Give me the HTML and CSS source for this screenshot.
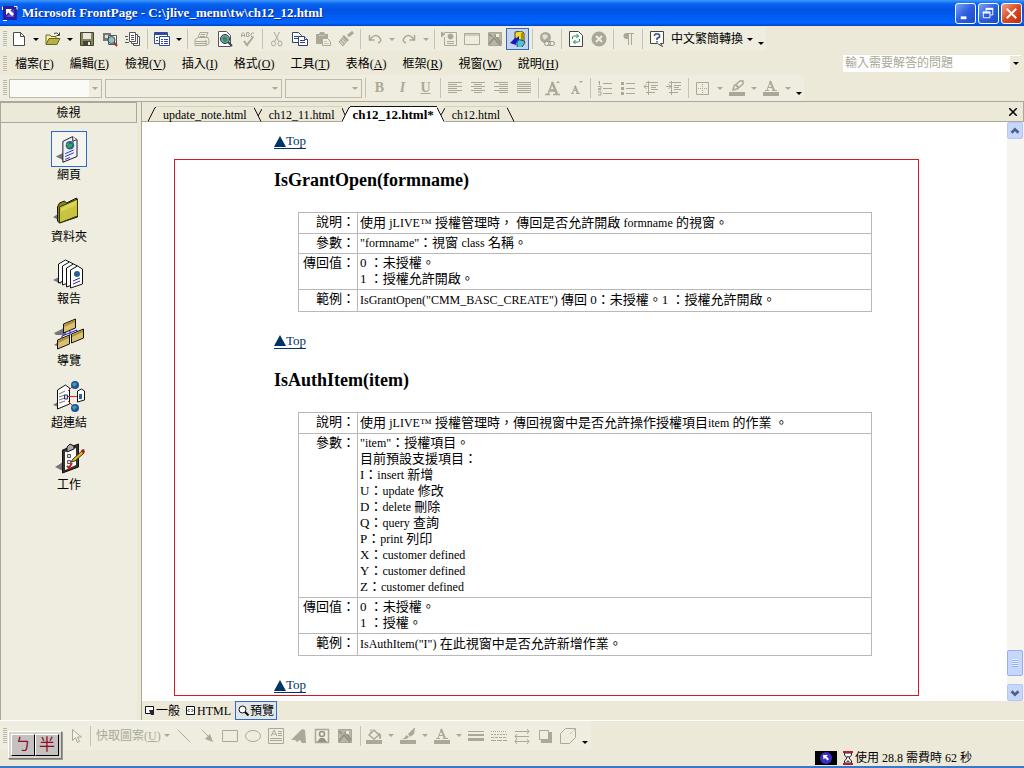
FILE: index.html
```html
<!DOCTYPE html>
<html lang="zh-Hant">
<head>
<meta charset="utf-8">
<title>Microsoft FrontPage - C:\jlive_menu\tw\ch12_12.html</title>
<link rel="stylesheet" href="styles.css">
</head>
<body>
<div class="window">
  <header class="titlebar">
    <svg class="app-icon" viewBox="0 0 16 16"><path d="M1 1h14v14H1z" fill="#2a1fa0"/><path d="M4 12L12 4v8z" fill="#5a50d0"/><path d="M4 4h6L8.500 5.500 12 9l-2 2-3.500-3.500L4 10z" fill="#fff"/><path d="M1 15.500h4M12 1.500h3v3M.5 5V1.500" stroke="#fff" fill="none"/></svg>
    <h1 class="title">Microsoft FrontPage - C:\jlive_menu\tw\ch12_12.html</h1>
    <div class="win-controls">
      <button class="win-btn" aria-label="最小化"><svg viewBox="0 0 20 20"><path d="M5 14.500h6" stroke="#fff" stroke-width="3"/></svg></button>
      <button class="win-btn" aria-label="還原"><svg viewBox="0 0 20 20" fill="none" stroke="#fff"><path d="M7.500 8V5.500h7v6H12" /><path d="M7 5h8" stroke-width="2"/><path d="M4.500 8.500h7v6h-7z"/><path d="M4 9h8" stroke-width="2"/></svg></button>
      <button class="win-btn close" aria-label="關閉"><svg viewBox="0 0 20 20"><path d="M5 5l10 10M15 5L5 15" stroke="#fff" stroke-width="2"/></svg></button>
    </div>
  </header>

  <div class="bars">
    <div class="bar-row">
      <div class="toolbar">
        <span class="grip"></span>
        <button class="tool" aria-label="新增"><svg viewBox="0 0 16 16"><path d="M2.500 1.500h7l4 4v9h-11z" fill="#fff" stroke="#4a4a4a"/><path d="M9.500 1.500v4h4" fill="none" stroke="#4a4a4a"/></svg></button>
        <button class="drop" aria-label="新增選項"></button>
        <button class="tool" aria-label="開啟"><svg viewBox="0 0 16 16"><path d="M1 13V4h4l1 1.500h5V8" fill="#f5f0a8" stroke="#6b6a1c"/><path d="M1 13.500l3-6h11l-3 6z" fill="#b5b04a" stroke="#6b6a1c"/><path d="M9 2.500q3-2 5 1.500M14.500 1.500V4.500h-3" fill="none" stroke="#444"/></svg></button>
        <button class="drop" aria-label="開啟選項"></button>
        <button class="tool" aria-label="儲存"><svg viewBox="0 0 16 16"><path d="M1.500 1.500h13v13h-13z" fill="#85855a" stroke="#444430"/><path d="M4 2h8v6H4z" fill="#e8e8dc"/><path d="M4 10h8v5H4z" fill="#444430"/><path d="M9 11h2v3H9z" fill="#eee"/></svg></button>
        <button class="tool" aria-label="尋找"><svg viewBox="0 0 16 16"><path d="M1 2h8v8H1z" fill="#777"/><path d="M3 4h5v3H3z" fill="#ddd"/><path d="M6.500 4.500h8v9h-8z" fill="#fff" stroke="#555"/><circle cx="9.500" cy="9" r="3.500" fill="#8cc5c8" stroke="#444"/><path d="M12 11.500l3 3.500" stroke="#9a3030" stroke-width="2"/></svg></button>
        <button class="tool" aria-label="發佈"><svg viewBox="0 0 16 16" fill="#fff" stroke="#555"><path d="M8.500 5.500h6v9h-6z"/><path d="M6.500 3.500h6v9h-6z"/><path d="M4.500 1.500h6v9h-6z"/><path d="M6 4.500h3M6 6.500h3M6 8.500h3M0 5.500h3M1 8.500h2M0 11.500h4"/></svg></button>
        <span class="sep"></span>
        <button class="tool" aria-label="資料夾清單"><svg viewBox="0 0 16 16"><path d="M.5 1.500h13v11H.5z" fill="#fff" stroke="#304a9c"/><path d="M1 2h12v2H1z" fill="#304a9c"/><path d="M5.500 5.500h10v9h-10z" fill="#fff" stroke="#304a9c"/><path d="M2 6.500h2M2 9.500h2M7 8.500h2M10 8.500h4M7 10.500h2M10 10.500h4M7 12.500h2M10 12.500h4" stroke="#304a9c"/></svg></button>
        <button class="drop" aria-label="窗格選項"></button>
        <span class="sep"></span>
        <button class="tool" disabled aria-label="列印"><svg viewBox="0 0 16 16" fill="none" stroke="#aaa998"><path d="M4 7l2-5.500h8L12 7M1 8.500L4 6.500h10l1 3v3l-3 2H1z"/><path d="M1.500 10.500h11M1.500 12.500h11M6.500 3.500h5M6 5.500h5M12 9v5" /></svg></button>
        <button class="tool" aria-label="預覽"><svg viewBox="0 0 16 16"><path d="M1.500.5h8l4 4v11h-12z" fill="#fff" stroke="#555"/><circle cx="8" cy="8" r="4.500" fill="#6aa7b0" stroke="#334"/><path d="M5 7q3-3 5 0t-3 4" fill="#3d8c4d"/><path d="M11 11l4 4" stroke="#444" stroke-width="2"/></svg></button>
        <button class="tool" disabled aria-label="拼字檢查"><svg viewBox="0 0 16 16" fill="none" stroke="#aaa998"><path d="M1.500 6V3L3 1.500 4.500 3v3M2 4.500h2M6.500 1.500V5.500H9L9.500 4.500 8 3.500 9.500 2.500 9 1.500zM14 2h-2l-1 1v2l1 1h2"/><path d="M4 10l3 4 6-8" stroke-width="2"/></svg></button>
        <span class="sep"></span>
        <button class="tool" disabled aria-label="剪下"><svg viewBox="0 0 16 16" fill="none" stroke="#aaa998"><path d="M5 1l4.500 9M10.500 1L6 10"/><ellipse cx="4.500" cy="12.500" rx="2" ry="2.500"/><ellipse cx="11" cy="12.500" rx="2" ry="2.500"/></svg></button>
        <button class="tool" aria-label="複製"><svg viewBox="0 0 16 16" fill="#fff" stroke="#304070"><path d="M.5 1.500h6l3 3v7h-9z"/><path d="M2 5.500h4M2 7.500h4"/><path d="M6.500 5.500h6l3 3v6h-9z"/><path d="M8 9.500h5M8 11.500h5M12.500 5.500v3h3"/></svg></button>
        <button class="tool" disabled aria-label="貼上"><svg viewBox="0 0 16 16"><path d="M1 3h3l1-2h4l1 2h3v10H1z" fill="#aaa998"/><path d="M7.500 7.500h5l3 3v4h-8z" fill="#f0eee0" stroke="#aaa998"/><path d="M9 10.500h3M9 12.500h5M4 4.500h6" stroke="#c9c7b8"/></svg></button>
        <button class="tool" disabled aria-label="複製格式"><svg viewBox="0 0 16 16"><path d="M15 1l-5 4" stroke="#aaa998" stroke-width="3"/><path d="M6 4l5 5-2 2-5-5z" fill="#aaa998"/><path d="M4 7l4 4-3 4-4-4z" fill="#d0cebe" stroke="#aaa998"/><path d="M3 9l3 4" stroke="#aaa998"/></svg></button>
        <span class="sep"></span>
        <button class="tool" disabled aria-label="復原"><svg viewBox="0 0 16 16" fill="none" stroke="#aaa998"><path d="M2.500 4v5h5M3 8.500Q8 2 12 6t-1 6" stroke-width="1.500"/></svg></button>
        <button class="drop off" disabled aria-label="復原選項"></button>
        <button class="tool" disabled aria-label="取消復原"><svg viewBox="0 0 16 16" fill="none" stroke="#aaa998"><path d="M13.500 4v5h-5M13 8.500Q8 2 4 6t1 6" stroke-width="1.500"/></svg></button>
        <button class="drop off" disabled aria-label="取消復原選項"></button>
        <span class="sep"></span>
        <button class="tool" disabled aria-label="網頁元件"><svg viewBox="0 0 16 16" fill="none" stroke="#aaa998"><path d="M3.500 1.500h12v13h-12V6"/><path d="M0 1l4 2-4 3z" fill="#aaa998"/><circle cx="9.500" cy="5.500" r="2.500" fill="#aaa998"/><path d="M6 10.500h7M6 12.500h7"/></svg></button>
        <button class="tool" disabled aria-label="插入表格"><svg viewBox="0 0 16 16" fill="none" stroke="#aaa998"><path d="M.5 2.500h15v11H.5zM0 4h16"/></svg></button>
        <button class="tool" disabled aria-label="插入圖片"><svg viewBox="0 0 16 16"><path d="M1.500 1.500h13v13h-13z" fill="#b8b6a6" stroke="#aaa998"/><path d="M2 13l5-6 6 7M2 3l3 3M8 4l6 8" stroke="#8f8e7f" stroke-width="1.500" fill="none"/><path d="M9 3h3v3H9z" fill="#efeddf"/></svg></button>
        <button class="tool active" aria-label="繪圖"><svg viewBox="0 0 16 16"><path d="M5 1l6-1 3 2v8H5z" fill="#f0dc28" stroke="#444"/><path d="M11 2h3v8h-3z" fill="#a89010"/><path d="M6 6v8L0 12zM4 9l5-4v9z" fill="#1818c0"/><path d="M7 12q0-4 4-3t4 2-3 5-5-1z" fill="#48c8d0" stroke="#247"/></svg></button>
        <span class="sep"></span>
        <button class="tool" disabled aria-label="超連結"><svg viewBox="0 0 16 16"><circle cx="6.500" cy="6.500" r="5.500" fill="#aaa998"/><path d="M3 5q2-3 5-1T5 9z" fill="#e2e0d0"/><rect x="5.500" y="10.500" width="6" height="4" rx="2" fill="#efeddf" stroke="#949384"/><rect x="9.500" y="10.500" width="6" height="4" rx="2" fill="none" stroke="#949384"/></svg></button>
        <span class="sep"></span>
        <button class="tool" aria-label="重新整理"><svg viewBox="0 0 16 16"><path d="M1.500.5h9l4 4v11h-13z" fill="#fff" stroke="#444"/><path d="M4.500 8V6l1-1h5M8.500 3l2 2-2 2M11.500 8v2l-1 1h-5M7.500 9l-2 2 2 2" fill="none" stroke="#218a43"/></svg></button>
        <button class="tool" disabled aria-label="停止"><svg viewBox="0 0 16 16"><circle cx="8" cy="8" r="7.500" fill="#aaa998"/><path d="M5 5l6 6M11 5l-6 6" stroke="#efeddf" stroke-width="2"/></svg></button>
        <span class="sep"></span>
        <button class="tool" disabled aria-label="顯示全部"><svg viewBox="0 0 16 16"><path d="M8.500 2v12M11.500 2v12M6 2.500h8" stroke="#aaa998"/><path d="M9 2H6.500a3 3 0 0 0 0 6H9z" fill="#aaa998"/></svg></button>
        <span class="sep"></span>
        <button class="tool" aria-label="說明"><svg viewBox="0 0 16 16"><path d="M1.500.5h13v12h-3l2 3-5-3h-7z" fill="#fffff0" stroke="#444"/><path d="M5.500 5V4l1-1h3l1 1v2L8 7.500V9M8 10v1.500" fill="none" stroke="#304a9c" stroke-width="1.500"/></svg></button>
        <button class="text-tool">中文繁簡轉換</button>
        <button class="drop" aria-label="轉換選項"></button>
        <button class="drop overflow" aria-label="工具列選項"></button>
      </div>
    </div>

    <div class="bar-row menu-row">
      <span class="grip"></span>
      <nav class="menu">
        <button>檔案(<u>F</u>)</button>
        <button>編輯(<u>E</u>)</button>
        <button>檢視(<u>V</u>)</button>
        <button>插入(<u>I</u>)</button>
        <button>格式(<u>O</u>)</button>
        <button>工具(<u>T</u>)</button>
        <button>表格(<u>A</u>)</button>
        <button>框架(<u>R</u>)</button>
        <button>視窗(<u>W</u>)</button>
        <button>說明(<u>H</u>)</button>
      </nav>
      <div class="ask">
        <input type="text" placeholder="輸入需要解答的問題" aria-label="輸入需要解答的問題">
        <button class="drop" aria-label="最近的問題"></button>
      </div>
    </div>

    <div class="bar-row format-row">
      <div class="toolbar">
        <span class="grip"></span>
        <div class="combos">
          <span class="combo style"><select disabled aria-label="樣式"><option></option></select></span>
          <span class="combo font"><select disabled aria-label="字型"><option></option></select></span>
          <span class="combo size"><select disabled aria-label="字型大小"><option></option></select></span>
        </div>
        <span class="sep"></span>
        <button class="tool letter" disabled><b>B</b></button>
        <button class="tool letter" disabled><i>I</i></button>
        <button class="tool letter" disabled><u>U</u></button>
        <span class="sep"></span>
        <button class="tool" disabled aria-label="靠左對齊"><svg viewBox="0 0 16 16"><path d="M1 2.500h14M1 4.500h9M1 6.500h14M1 8.500h9M1 10.500h14M1 12.500h9" stroke="#aaa998"/></svg></button>
        <button class="tool" disabled aria-label="置中"><svg viewBox="0 0 16 16"><path d="M1 2.500h14M4 4.500h8M1 6.500h14M4 8.500h8M1 10.500h14M4 12.500h8" stroke="#aaa998"/></svg></button>
        <button class="tool" disabled aria-label="靠右對齊"><svg viewBox="0 0 16 16"><path d="M1 2.500h14M6 4.500h9M1 6.500h14M6 8.500h9M1 10.500h14M6 12.500h9" stroke="#aaa998"/></svg></button>
        <button class="tool" disabled aria-label="左右對齊"><svg viewBox="0 0 16 16"><path d="M1 2.500h14M1 4.500h14M1 6.500h14M1 8.500h14M1 10.500h14M1 12.500h14" stroke="#aaa998"/></svg></button>
        <span class="sep"></span>
        <button class="tool" disabled aria-label="放大字型"><svg viewBox="0 0 16 16"><path d="M0 14.500h5M8 14.500h7M3 14L7.500 2.500" stroke="#aaa998" stroke-width="1.500"/><path d="M7 2l5 12M4.500 10.500h6" stroke="#aaa998" stroke-width="2.500"/><path d="M11 3l2-2 2 2z" fill="#aaa998"/></svg></button>
        <button class="tool" disabled aria-label="縮小字型"><svg viewBox="0 0 16 16"><path d="M3 13.500h3M8 13.500h4M4.500 13l3-7.500M5 10.500h4" stroke="#aaa998"/><path d="M7 6l3 7.500" stroke="#aaa998" stroke-width="2"/><path d="M11 1h4l-2 2z" fill="#aaa998"/></svg></button>
        <span class="sep"></span>
        <button class="tool" disabled aria-label="編號"><svg viewBox="0 0 16 16"><path d="M2.500 1v4M1 2h2M1 6.500h3v2H1.500V10h3M1 12h3v3H1M6 3.500h9M6 8.500h9M6 13.500h9" fill="none" stroke="#aaa998"/></svg></button>
        <button class="tool" disabled aria-label="項目符號"><svg viewBox="0 0 16 16"><path d="M1 2h3v3H1zM1 7h3v3H1zM1 12h3v3H1z" fill="#aaa998"/><path d="M6 3.500h9M6 8.500h9M6 13.500h9" stroke="#aaa998"/></svg></button>
        <button class="tool" disabled aria-label="減少縮排"><svg viewBox="0 0 16 16"><path d="M3 2.500h12M8 5.500h7M8 7.500h5M8 9.500h7M3 12.500h9M1 6.500h5M3.500 4L1 6.500 3.500 9M5.500 1v14" fill="none" stroke="#aaa998"/></svg></button>
        <button class="tool" disabled aria-label="增加縮排"><svg viewBox="0 0 16 16"><path d="M3 2.500h12M8 5.500h7M8 7.500h5M8 9.500h7M3 12.500h9M0 6.500h5M2.500 4L5 6.500 2.500 9M5.500 1v14" fill="none" stroke="#aaa998"/></svg></button>
        <span class="sep"></span>
        <button class="tool" disabled aria-label="框線"><svg viewBox="0 0 16 16"><path d="M1.500 2.500h12v12h-12z" fill="none" stroke="#aaa998"/><path d="M7.500 4v9M3 8.500h9" stroke="#aaa998" stroke-dasharray="1 1"/></svg></button>
        <button class="drop off" disabled aria-label="框線選項"></button>
        <button class="tool" disabled aria-label="醒目提示"><svg viewBox="0 0 16 16"><path d="M0 12h16v4H0z" fill="#aaa998"/><path d="M4 10l1-4 6-5h3v3L8 9z" fill="none" stroke="#aaa998" stroke-width="1.500"/><path d="M7 5l3 3" stroke="#aaa998" stroke-width="2"/></svg></button>
        <button class="drop off" disabled aria-label="醒目提示選項"></button>
        <button class="tool" disabled aria-label="字型色彩"><svg viewBox="0 0 16 16"><path d="M0 12h16v4H0z" fill="#aaa998"/><path d="M2 10.500h4M9 10.500h5M4 10l3.500-9M5 7.500h5" stroke="#aaa998"/><path d="M7 1l4 9.500" stroke="#aaa998" stroke-width="2"/></svg></button>
        <button class="drop off" disabled aria-label="字型色彩選項"></button>
        <button class="drop overflow" aria-label="格式工具列選項"></button>
      </div>
    </div>
  </div>

  <div class="workspace">
    <aside class="views">
      <h2 class="views-title">檢視</h2>
      <nav class="view-list">
        <button class="view current"><svg viewBox="0 0 36 36"><path d="M4 26l8-4v8z" fill="#777"/><path d="M11.500 10l10-5 5 3v18l-15 6z" fill="#f2f2fa" stroke="#111"/><path d="M22 5v5l4-2" fill="#fff" stroke="#111"/><circle cx="19" cy="14" r="4.500" fill="#24608c"/><path d="M15 13q3-3 4 0l3-1-1 4-4 1z" fill="#38a060"/><path d="M14 23l9-4M14 26l9-4M14 29l5-2" stroke="#2222c8"/></svg><span>網頁</span></button>
        <button class="view"><svg viewBox="0 0 36 36"><path d="M2 24l7-4v8z" fill="#777"/><path d="M6.500 14l2-4 5-2 2 2 10-5 1 2v17l-18 6-2-2z" fill="#8c8818" stroke="#111"/><path d="M8.500 14l18-8v17l-18 7z" fill="#c8c440" stroke="#333300"/><path d="M10 15l15-7v4l-15 7z" fill="#dad65c"/></svg><span>資料夾</span></button>
        <button class="view"><svg viewBox="0 0 36 36" stroke="#111"><path d="M2 25l8-4v8z" fill="#777" stroke="none"/><path d="M7.500 9l7-4 4 2v17l-11 4z" fill="#fff"/><path d="M11.500 11l7-4 4 2v17l-11 4z" fill="#fff"/><path d="M15.500 13l7-4 4 2v17l-11 4z" fill="#fff"/><path d="M19.500 15l7-4 5 3v15l-12 4z" fill="#fff"/><circle cx="26" cy="19" r="3" fill="#286090" stroke="none"/><path d="M22 26l7-3M22 29l7-3" stroke="#22c"/></svg><span>報告</span></button>
        <button class="view"><svg viewBox="0 0 36 36"><path d="M3 16l12-6v8H5zM3 28l6-4v6z" fill="#777"/><g fill="#d8c078" stroke="#111"><path d="M12.500 7l12-5v9l-12 5z"/><path d="M6.500 23l12-5v9l-12 5z"/><path d="M20.500 17l12-5v9l-12 5z"/></g><path d="M13 8l11-5v2l-11 5zM7 24l11-5v2L7 26zM21 18l11-5v2l-11 5z" fill="#b48c28"/><path d="M19 14v4M11 21v-2l15-6v2" fill="none" stroke="#22c"/></svg><span>導覽</span></button>
        <button class="view"><svg viewBox="0 0 36 36"><path d="M2 26l8-5v8z" fill="#777"/><path d="M6.500 11l8-5 4 3v16l-12 5z" fill="#fff" stroke="#111"/><path d="M8 15l6-3M8 18l6-2M8 21l6-2M8 24l6-2" stroke="#777"/><path d="M17 12l6-6M16 17.500h10M17 22l6 6" stroke="#d22"/><path d="M13.500 16h3v4h-3z" fill="#ddd" stroke="#336"/><circle cx="24" cy="6" r="4" fill="#2050a0"/><path d="M21 5q3-3 5 0l-3 3z" fill="#38a890"/><circle cx="24" cy="29" r="4" fill="#2050a0"/><path d="M21 28q3-3 5 0l-3 3z" fill="#38a890"/><path d="M26.500 12l4-2 3 2v9l-7 2z" fill="#fff" stroke="#111"/><path d="M28 15h3v5h-3z" fill="#26a"/></svg><span>超連結</span></button>
        <button class="view"><svg viewBox="0 0 36 36"><path d="M4 26l8-5v9z" fill="#777"/><path d="M11.500 9l16-6v23l-16 6z" fill="#33332a" stroke="#111"/><path d="M14 11l11-4v17l-11 5z" fill="#fff"/><path d="M16 6l3-3 2 1 2 1v3l-7 3z" fill="#aaa" stroke="#111"/><path d="M16.500 13.500h3v3h-3zM16.500 19.500h3v3h-3z" fill="#ddd" stroke="#555"/><path d="M16 25l2 2 3-5" fill="none" stroke="#d11" stroke-width="2"/><path d="M22 18l9-8 2 2-9 8-4 1z" fill="#e8b820" stroke="#333"/><path d="M30 9l3-1 1 3-2 2z" fill="#a82020"/></svg><span>工作</span></button>
      </nav>
    </aside>

    <main class="editor">
      <div class="tabs">
        <svg class="slant" viewBox="0 0 8 16"><path d="M0 15.500L7 1.500h1" fill="none" stroke="#111"/></svg>
        <button class="tab">update_note.html</button>
        <svg class="slant" viewBox="0 0 8 16"><path d="M0 1.500l7 14M8 3L4 10" fill="none" stroke="#111"/></svg>
        <button class="tab">ch12_11.html</button>
        <svg class="slant" viewBox="0 0 8 16"><path d="M8 1v15H0z" fill="#fff"/><path d="M0 15.500L7 1.500h1M0 2l3 7" fill="none" stroke="#111"/></svg>
        <button class="tab current">ch12_12.html*</button>
        <svg class="slant" viewBox="0 0 8 16"><path d="M0 1v15h8z" fill="#fff"/><path d="M0 1.500l7 14M8 2L4 9" fill="none" stroke="#111"/></svg>
        <button class="tab">ch12.html</button>
        <svg class="slant" viewBox="0 0 8 16"><path d="M0 1.500l7 14" fill="none" stroke="#111"/></svg>
        <button class="tab-close" aria-label="關閉檔案"><svg viewBox="0 0 8 8"><path d="M0 0l8 8M8 0L0 8" stroke="#000" stroke-width="1.500"/></svg></button>
      </div>

      <div class="viewport">
        <article class="doc">
          <a class="top" href="#top"><svg class="tri" viewBox="0 0 12 11"><path d="M6 0l6 11H0z" fill="#003366"/></svg>Top</a>
          <div class="frame">
            <section>
              <h2>IsGrantOpen(formname)</h2>
              <table>
                <tr><th scope="row">說明：</th><td>使用 <span class="en">jLIVE™</span> 授權管理時， 傳回是否允許開啟 <span class="en">formname</span> 的視窗。</td></tr>
                <tr><th scope="row">參數：</th><td><span class="en">"formname"</span>：視窗 <span class="en">class</span> 名稱。</td></tr>
                <tr><th scope="row">傳回值：</th><td>0 ：未授權。<br>1 ：授權允許開啟。</td></tr>
                <tr><th scope="row">範例：</th><td><span class="en">IsGrantOpen("CMM_BASC_CREATE")</span> 傳回 0：未授權。1 ：授權允許開啟。</td></tr>
              </table>
              <a class="top" href="#top"><svg class="tri" viewBox="0 0 12 11"><path d="M6 0l6 11H0z" fill="#003366"/></svg>Top</a>
            </section>
            <section>
              <h2>IsAuthItem(item)</h2>
              <table>
                <tr><th scope="row">說明：</th><td>使用 <span class="en">jLIVE™</span> 授權管理時，傳回視窗中是否允許操作授權項目<span class="en">item</span> 的作業 。</td></tr>
                <tr><th scope="row">參數：</th><td><span class="en">"item"</span>：授權項目。<br>目前預設支援項目：<br>I：<span class="en">insert</span> 新增<br>U：<span class="en">update</span> 修改<br>D：<span class="en">delete</span> 刪除<br>Q：<span class="en">query</span> 查詢<br>P：<span class="en">print</span> 列印<br>X：<span class="en">customer defined</span><br>Y：<span class="en">customer defined</span><br>Z：<span class="en">customer defined</span></td></tr>
                <tr><th scope="row">傳回值：</th><td>0 ：未授權。<br>1 ：授權。</td></tr>
                <tr><th scope="row">範例：</th><td><span class="en">IsAuthItem("I")</span> 在此視窗中是否允許新增作業。</td></tr>
              </table>
              <a class="top" href="#top"><svg class="tri" viewBox="0 0 12 11"><path d="M6 0l6 11H0z" fill="#003366"/></svg>Top</a>
            </section>
          </div>
        </article>
        <div class="scrollbar">
          <button class="scroll-btn" aria-label="向上捲動"><svg viewBox="0 0 16 16"><path d="M4 10l4-4 4 4" fill="none" stroke="#4d6185" stroke-width="3"/></svg></button>
          <div class="track"><div class="thumb"></div></div>
          <button class="scroll-btn" aria-label="向下捲動"><svg viewBox="0 0 16 16"><path d="M4 6l4 4 4-4" fill="none" stroke="#4d6185" stroke-width="3"/></svg></button>
        </div>
      </div>

      <div class="modes">
        <button class="mode"><svg viewBox="0 0 11 11"><path d="M1.500 1.500h8v7h-8z" fill="#fff" stroke="#111"/><path d="M5 5h5v5H7z" fill="#223"/></svg>一般</button>
        <button class="mode"><svg viewBox="0 0 11 11"><path d="M1.500 1.500h8v8h-8z" fill="#fff" stroke="#111"/><path d="M4.500 4L3 5.500 4.500 7M6.500 4L8 5.500 6.500 7" fill="none" stroke="#111"/></svg>HTML</button>
        <button class="mode current"><svg viewBox="0 0 11 11"><circle cx="4.500" cy="4.500" r="3.500" fill="#fff" stroke="#111"/><path d="M7 7l3.500 3.500" stroke="#111" stroke-width="2"/></svg>預覽</button>
      </div>
    </main>
  </div>

  <footer class="bottom">
    <div class="ime"><button>ㄅ</button><button>半</button></div>
    <div class="toolbar draw">
      <span class="grip"></span>
      <button class="tool pick" disabled aria-label="選取物件"><svg viewBox="0 0 16 16"><path d="M4.500 1.500v11l3-3 2 5 2-1-2-4.500h4z" fill="#f4f2e6" stroke="#aaa998"/></svg></button>
      <span class="sep"></span>
      <button class="text-tool" disabled>快取圖案(<u>U</u>)</button>
      <button class="drop off" disabled aria-label="快取圖案選項"></button>
      <button class="tool" disabled aria-label="線條"><svg viewBox="0 0 16 16"><path d="M2 2l12 12" stroke="#aaa998"/></svg></button>
      <button class="tool" disabled aria-label="箭號"><svg viewBox="0 0 16 16"><path d="M3 2l8 8" stroke="#aaa998"/><path d="M14 14l-8-3 5-5z" fill="#aaa998"/></svg></button>
      <button class="tool" disabled aria-label="矩形"><svg viewBox="0 0 16 16"><path d="M.5 2.500h15v11H.5z" fill="none" stroke="#aaa998"/></svg></button>
      <button class="tool" disabled aria-label="橢圓"><svg viewBox="0 0 16 16"><ellipse cx="8" cy="8" rx="7.500" ry="5.500" fill="none" stroke="#aaa998"/></svg></button>
      <button class="tool" disabled aria-label="文字方塊"><svg viewBox="0 0 16 16" fill="none" stroke="#aaa998"><path d="M.5.5h15v15H.5z"/><path d="M3 8l3-6 3 6M4 6h4M10 3.500h4M10 5.500h4M10 7.500h4M2 10.500h12M2 12.500h12"/></svg></button>
      <button class="tool" disabled aria-label="文字藝術師"><svg viewBox="0 0 16 16"><path d="M0 12L11 1l3 1 1 13h-4l-2-3-3 2-2-2z" fill="#aaa998"/></svg></button>
      <button class="tool" disabled aria-label="美工圖案"><svg viewBox="0 0 16 16"><path d="M1.500 1.500h13v13h-13z" fill="none" stroke="#aaa998" stroke-width="1.500"/><circle cx="8" cy="6" r="2.500" fill="none" stroke="#949384" stroke-width="1.500"/><path d="M3 14l3-4h4l3 4z" fill="#949384"/></svg></button>
      <button class="tool" disabled aria-label="圖片"><svg viewBox="0 0 16 16"><path d="M1.500 1.500h13v13h-13z" fill="#b8b6a6" stroke="#aaa998"/><path d="M2 13l5-6 6 7M2 3l3 3M8 4l6 8" stroke="#8f8e7f" stroke-width="1.500" fill="none"/><path d="M9 3h3v3H9z" fill="#efeddf"/></svg></button>
      <span class="sep"></span>
      <button class="tool" disabled aria-label="填滿色彩"><svg viewBox="0 0 16 16"><path d="M0 12h16v4H0z" fill="#aaa998"/><path d="M3 7l5-5 5 5-5 4z" fill="#efeddf" stroke="#aaa998" stroke-width="1.500"/><path d="M5 1v5M13 5q3 2 1 6z" fill="#aaa998" stroke="#aaa998"/></svg></button>
      <button class="drop off" disabled aria-label="填滿選項"></button>
      <button class="tool" disabled aria-label="線條色彩"><svg viewBox="0 0 16 16"><path d="M0 12h16v4H0z" fill="#aaa998"/><path d="M1 11q4 0 5-4l3 2q-2 3-8 2zM8 6l6-6h1l-1 6-4 3z" fill="#aaa998"/></svg></button>
      <button class="drop off" disabled aria-label="線條色彩選項"></button>
      <button class="tool" disabled aria-label="文字色彩"><svg viewBox="0 0 16 16"><path d="M0 12h16v4H0z" fill="#aaa998"/><path d="M2 10.500h4M9 10.500h5M4 10l3.500-9M5 7.500h5" stroke="#aaa998"/><path d="M7 1l4 9.500" stroke="#aaa998" stroke-width="2"/></svg></button>
      <button class="drop off" disabled aria-label="文字色彩選項"></button>
      <button class="tool" disabled aria-label="線條樣式"><svg viewBox="0 0 16 16"><path d="M0 3.500h16" stroke="#aaa998"/><path d="M0 7h16" stroke="#aaa998" stroke-width="2"/><path d="M0 11.500h16" stroke="#aaa998" stroke-width="3"/></svg></button>
      <button class="tool" disabled aria-label="虛線樣式"><svg viewBox="0 0 16 16" stroke="#aaa998"><path d="M0 3.500h16" stroke-dasharray="1 1"/><path d="M0 6.500h16" stroke-dasharray="2 1"/><path d="M0 9.500h16" stroke-dasharray="3 1"/><path d="M0 12.500h16" stroke-dasharray="5 1"/></svg></button>
      <button class="tool" disabled aria-label="箭號樣式"><svg viewBox="0 0 16 16" fill="none" stroke="#aaa998"><path d="M1 3.500h14M13 1l2 2.500L13 6M1 8.500h14M3 6L1 8.500 3 11M1 13.500h14M13 11l2 2.500-2 2.500M3 11l-2 2.500L3 16"/></svg></button>
      <button class="tool" disabled aria-label="陰影樣式"><svg viewBox="0 0 16 16"><path d="M4 4h11v11H4z" fill="#aaa998"/><path d="M2.500 2.500h9v9h-9z" fill="#efeddf" stroke="#aaa998"/></svg></button>
      <button class="tool" disabled aria-label="立體樣式"><svg viewBox="0 0 16 16"><path d="M.5 5.500l5-5h10v9l-6 6h-9z" fill="none" stroke="#aaa998"/><path d="M10 6l5-5" stroke="#aaa998" stroke-dasharray="1 1"/></svg></button>
      <button class="drop overflow" aria-label="繪圖工具列選項"></button>
    </div>
    <div class="status">
      <svg class="globe" viewBox="0 0 22 14"><path d="M0 0h22v14H0z" fill="#000"/><circle cx="11" cy="7" r="6" fill="#3a30c8"/><path d="M8 4h5l-1.500 1.500L14 8l-1.500 1.500L10 7 8.500 8.500z" fill="#fff"/></svg>
      <svg class="glass" viewBox="0 0 10 14"><path d="M1.500 2v2L4 7 1.500 10v2h7v-2L6 7l2.500-3V2z" fill="#fff" stroke="#222"/><path d="M0 1h10M0 13h10" stroke="#b02030" stroke-width="2"/><path d="M3 5h4L5 7zM3 11l2-2 2 2z" fill="#555"/></svg>
      <span>使用 28.8 需費時 62 秒</span>
    </div>
  </footer>
</div>
</body>
</html>
```
FILE: styles.css
```css
* { box-sizing: border-box; }

body {
  margin: 0;
  background: #ece9d8;
  color: #000;
  font: 12px/16px "Liberation Serif", "Noto Sans CJK TC", serif;
}

button, input, select {
  margin: 0;
  padding: 0;
  border: 0;
  background: none;
  color: inherit;
  font: inherit;
}

svg { display: block; flex: none; }

.window {
  display: flex;
  flex-direction: column;
  min-height: 100vh;
  border-bottom: 2px solid #3a78c8;
}

/* Title bar */
.titlebar {
  display: flex;
  align-items: center;
  height: 26px;
  padding: 0 2px;
  background: linear-gradient(#3c9cff 0, #0a62f0 4px, #0054e3 10px, #0060fb 20px, #0066ff 23px, #0040c0 26px);
}
.app-icon { width: 16px; height: 16px; }
.title {
  flex: 1;
  margin: 0 0 0 4px;
  color: #fff;
  font-size: 13px;
  line-height: 16px;
  text-shadow: 1px 1px #0a2a80;
}
.win-controls { display: flex; gap: 2px; }
.win-btn {
  width: 21px;
  height: 21px;
  border: 1px solid #fff;
  border-radius: 3px;
  background: linear-gradient(135deg, #7aa2f4, #2a5fe0 50%, #1c4ac8);
}
.win-btn.close { background: linear-gradient(135deg, #f0a088, #dc4a24 50%, #b83010); }

/* Tool bars */
.bars {
  padding-top: 1px;
  border-bottom: 1px solid #aca899;
}
.bar-row { display: flex; height: 24px; }
.format-row { height: 26px; }
.toolbar {
  display: flex;
  align-items: center;
  padding-left: 3px;
  background: #efeddf;
  border-radius: 2px;
}
.grip {
  flex: none;
  width: 4px;
  height: 16px;
  background: repeating-linear-gradient(#bcb9a8 0 1px, #efeddf 1px 2px);
}
.tool {
  display: flex;
  flex: none;
  align-items: center;
  justify-content: center;
  width: 23px;
  height: 22px;
}
.tool svg { width: 16px; height: 16px; }
.tool.active { border: 1px solid #316ac5; background: #c8d4ea; }
.tool.letter { color: #aaa998; font-size: 14px; font-weight: bold; }
.drop {
  flex: none;
  width: 11px;
  height: 16px;
}
.drop::after {
  content: "";
  display: block;
  width: 0;
  margin: 0 auto;
  border: 3px solid transparent;
  border-top-color: #000;
  border-bottom: 0;
}
.drop.off::after { border-top-color: #aaa998; }
.drop.overflow { align-self: flex-end; }
.sep {
  flex: none;
  width: 6px;
  height: 20px;
  background: linear-gradient(90deg, transparent 3px, #c5c2b2 3px 4px, transparent 4px);
}
.text-tool { padding: 0 1px 0 3px; white-space: nowrap; }
.text-tool:disabled { color: #aaa998; }

.menu-row { align-items: center; padding: 1px 3px 0; }
.menu { display: flex; gap: 16px; margin-left: 8px; }
.menu button { white-space: nowrap; }
.ask {
  display: flex;
  align-items: center;
  width: 178px;
  height: 17px;
  margin-left: auto;
  background: #fff;
}
.ask input { flex: 1; min-width: 0; height: 17px; padding-left: 2px; }
.ask input::placeholder { color: #aaa998; opacity: 1; }
.ask .drop { background: #ece9d8; }

.combos { display: flex; gap: 3px; margin-left: 2px; }
.combo {
  display: flex;
  align-items: center;
  height: 19px;
  border: 1px solid #bcb9a8;
}
.combo select { flex: 1; height: 17px; appearance: none; }
.combo::after {
  content: "";
  margin: 0 3px;
  border: 3px solid transparent;
  border-top-color: #aaa998;
  border-bottom: 0;
}
.combo.style { width: 93px; }
.combo.style select { background: #fff; }
.combo.font { width: 177px; }
.combo.size { width: 77px; }

/* Workspace */
.workspace { display: flex; flex: 1; }
.views {
  flex: none;
  width: 137px;
  margin-right: 4px;
  border-left: 1px solid #aca899;
  background: #efeddf;
}
.views-title {
  margin: 0;
  padding: 2px 0 1px;
  border: 1px solid #aca899;
  border-left: 0;
  background: #ece9d8;
  font-size: 12px;
  font-weight: normal;
  line-height: 16px;
  text-align: center;
}
.view-list {
  display: flex;
  flex-direction: column;
  align-items: center;
  gap: 10px;
  padding-top: 8px;
}
.view { display: flex; flex-direction: column; align-items: center; }
.view svg { width: 36px; height: 36px; }
.view.current svg { border: 1px solid #316ac5; background: #f4f4f0; }

.editor {
  display: flex;
  flex: 1;
  flex-direction: column;
  min-width: 0;
  border-left: 1px solid #aca899;
}
.tabs {
  display: flex;
  align-items: flex-end;
  height: 20px;
  padding: 0 6px;
  border-right: 1px solid #aca899;
  background: linear-gradient(#aca899, #aca899) bottom / 100% 1px no-repeat;
}
.slant { width: 8px; height: 16px; }
.tab {
  height: 16px;
  padding: 0 7px;
  border-top: 1px solid #d4d1c0;
  line-height: 16px;
  white-space: nowrap;
}
.tab.current {
  padding: 0 3px;
  border-top-color: #111;
  background: #fff;
  font-size: 13px;
  font-weight: bold;
}
.tab-close { align-self: center; margin-left: auto; }
.tab-close svg { width: 8px; height: 8px; }

.viewport { display: flex; flex: 1; background: #fff; }
.doc { flex: 1; min-width: 0; padding: 12px 88px 4px 32px; }
.top {
  display: inline-flex;
  align-items: center;
  margin-left: 100px;
  border-bottom: 1px solid #003366;
  color: #003366;
  font-size: 13px;
  line-height: 14px;
  text-decoration: none;
}
.frame .top { margin-left: 99px; }
.tri { width: 12px; height: 11px; }
.frame {
  margin-top: 8px;
  padding-top: 8px;
  border: 1px solid #d01828;
}
.frame h2 {
  margin: 0 0 20px 99px;
  font-size: 18px;
  line-height: 24px;
}
.frame table {
  width: calc(100% - 169px);
  margin: 0 46px 22px 123px;
  border-collapse: collapse;
  font-size: 13px;
  line-height: 16px;
}
.frame section + section { padding-top: 18px; }
.frame th, .frame td {
  padding: 1px 2px 2px;
  border: 1px solid #b8b8b8;
  vertical-align: top;
}
.frame th {
  width: 59px;
  padding-left: 0;
  font-weight: normal;
  text-align: right;
  white-space: nowrap;
}
.frame tr:first-child td, .frame tr:last-child td { padding-top: 2px; }
.frame tr:last-child td { padding-bottom: 3px; }
.en { font-size: 12px; line-height: 12px; }

.scrollbar {
  display: flex;
  flex: none;
  flex-direction: column;
  width: 17px;
  background: #f5f4ee;
}
.scroll-btn {
  width: 16px;
  height: 17px;
  border: 1px solid #b4c8f4;
  border-radius: 2px;
  background: #c6d6fc;
}
.scroll-btn svg { width: 14px; height: 14px; }
.track { display: flex; flex: 1; flex-direction: column; justify-content: flex-end; padding-bottom: 8px; }
.thumb {
  width: 16px;
  height: 26px;
  border: 1px solid #98b0e8;
  border-radius: 2px;
  background: repeating-linear-gradient(#eef4fe 0 1px, #8cb0f8 1px 2px) center / 6px 8px no-repeat, #c6d6fc;
}

.modes { display: flex; gap: 3px; height: 19px; padding-left: 1px; }
.mode {
  display: flex;
  align-items: center;
  gap: 1px;
  padding: 0 1px;
}
.mode svg { width: 11px; height: 11px; }
.mode.current { padding: 0 2px; border: 1px solid #316ac5; background: #e1e6e8; }

/* Drawing bar and status */
.bottom {
  position: relative;
  display: flex;
  flex-direction: column;
  align-items: flex-start;
  border-top: 1px solid #fff;
}
.draw { height: 29px; }
.pick { margin-left: 57px; }
.status {
  display: flex;
  align-items: center;
  align-self: flex-end;
  height: 16px;
  margin-right: 52px;
}
.globe { width: 22px; height: 14px; }
.glass { width: 10px; height: 14px; margin: 0 2px 0 6px; }
.ime {
  position: absolute;
  left: 8px;
  bottom: 7px;
  display: flex;
  padding: 2px;
  border: 1px solid #fff;
  border-right-color: #777;
  border-bottom-color: #777;
  background: #d8d4c8;
  box-shadow: 1px 1px #999;
}
.ime button {
  width: 24px;
  height: 22px;
  border: 1px solid #fff;
  border-right-color: #000;
  border-bottom-color: #000;
  background: #c4c2c0;
  color: #900c20;
  font-size: 16px;
  line-height: 18px;
}
```
